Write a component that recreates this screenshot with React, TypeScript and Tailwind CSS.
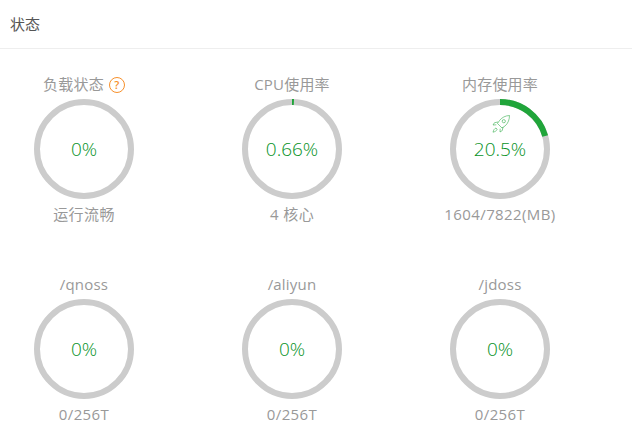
const Rocket = () => (
  <svg width="20" height="20" viewBox="0 0 20 20" fill="none" stroke="#20a53a" strokeWidth="0.9" strokeOpacity="0.6" className="absolute left-[41px] top-[15px]">
    <path d="M18.5 1.500c-4 .2-7.500 1.800-10 5l-2 3 4.500 4.500 3-2c3-2.500 4.500-6.500 4.500-10.500z" />
    <circle cx="12.800" cy="7.200" r="1.600" />
    <path d="M7 8l-3.500.7-1.500 2.300 3.300-.2M12 13l-.7 3.500-2.300 1.500.2-3.300" />
    <path d="M5 14c-1.500.5-2.500 2-3 4.200 2.200-.5 3.700-1.500 4.200-3z" />
  </svg>
);

const Gauge = ({ label, value, sub, percent, help, rocket }: { label: string; value: string; sub: string; percent: number; help?: boolean; rocket?: boolean }) => {
  const len = 2 * Math.PI * 47;
  return (
    <div className="flex flex-col items-center h-[200px]">
      <div className="h-[29px] flex items-center gap-[5px] text-[15px] tracking-[0.2px] text-[#999] whitespace-nowrap">
        {label}
        {help && (
          <span className="w-4 h-4 rounded-full border-[1.5px] border-[#f7902b] text-[#f7902b] text-[11px] font-semibold leading-[13px] text-center">?</span>
        )}
      </div>
      <div className="relative w-[100px] h-[100px] flex items-center justify-center">
        <svg width="100" height="100" viewBox="0 0 100 100" className="absolute inset-0 -rotate-90">
          <circle cx="50" cy="50" r="47" fill="none" stroke="#cccccc" strokeWidth="6" />
          <circle cx="50" cy="50" r="47" fill="none" stroke="#20a53a" strokeWidth="6" strokeDasharray={`${(len * percent) / 100} ${len}`} />
        </svg>
        {rocket && <Rocket />}
        <span className="relative text-[19px] font-light text-[#07921f]">{value}</span>
      </div>
      <div className="h-[31px] flex items-center text-[15px] tracking-[0.4px] text-[#999] whitespace-nowrap">{sub}</div>
    </div>
  );
};

export default function App() {
  return (
    <div className="w-[632px] h-[434px] overflow-hidden bg-white font-['Open_Sans','Noto_Sans_CJK_SC',sans-serif]">
      <div className="h-[49px] flex items-center pl-[10px] text-[15px] text-[#555] border-b border-[#eee]">状态</div>
      <div className="grid grid-cols-[168px_168px_168px] gap-x-10 pt-[21px]">
        <Gauge label="负载状态" help value="0%" sub="运行流畅" percent={0} />
        <Gauge label="CPU使用率" value="0.66%" sub="4 核心" percent={0.66} />
        <Gauge label="内存使用率" rocket value="20.5%" sub="1604/7822(MB)" percent={20.5} />
        <Gauge label="/qnoss" value="0%" sub="0/256T" percent={0} />
        <Gauge label="/aliyun" value="0%" sub="0/256T" percent={0} />
        <Gauge label="/jdoss" value="0%" sub="0/256T" percent={0} />
      </div>
    </div>
  );
}
